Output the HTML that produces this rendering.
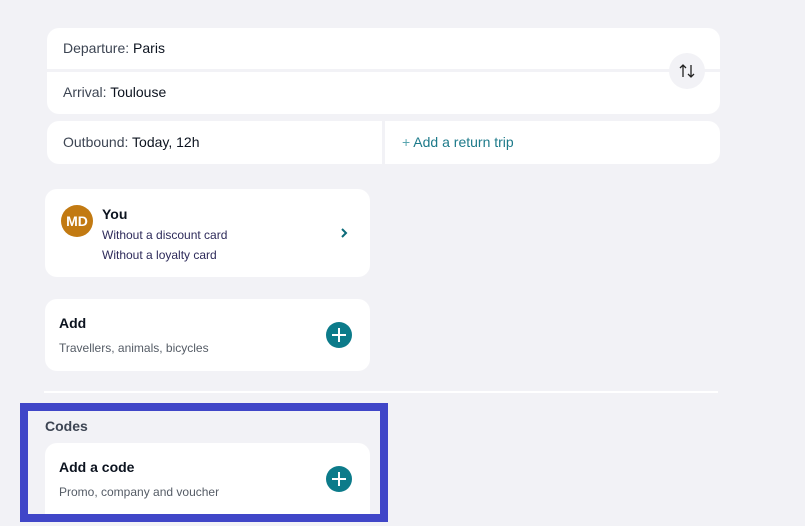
<!DOCTYPE html>
<html><head><meta charset="utf-8"><style>
*{box-sizing:border-box;margin:0;padding:0}
body{width:805px;height:526px;background:#f2f2f6;font-family:"Liberation Sans",sans-serif;position:relative;overflow:hidden;color:#0c131f}
.card{position:absolute;background:#fff;border-radius:12px}
.t{position:absolute;white-space:nowrap}
.plus{position:absolute;width:26px;height:26px;border-radius:50%;background:#0c7b8a}
.plus:before,.plus:after{content:"";position:absolute;background:#fff;left:50%;top:50%;transform:translate(-50%,-50%)}
.plus:before{width:14px;height:2px}.plus:after{width:2px;height:14px}
</style></head><body>
<div class="card" style="left:47px;top:28px;width:673px;height:86px"></div>
<div style="position:absolute;left:47px;top:69px;width:673px;height:3px;background:#f2f2f6"></div>
<div class="t" style="left:63px;top:40px;font-size:14px;color:#3d4553">Departure: <span style="color:#0c131f">Paris</span></div>
<div class="t" style="left:63px;top:84px;font-size:14px;color:#3d4553">Arrival: <span style="color:#0c131f">Toulouse</span></div>
<div style="position:absolute;left:669px;top:53px;width:36px;height:36px;border-radius:50%;background:#f2f2f6"></div>
<svg style="position:absolute;left:678px;top:62px" width="18" height="18" viewBox="0 0 18 18" fill="none" stroke="#222" stroke-width="1.3"><path d="M5 15V3M2 6l3-3 3 3M13 3v12M10 12l3 3 3-3"/></svg>
<div class="card" style="left:47px;top:121px;width:673px;height:43px"></div>
<div style="position:absolute;left:382px;top:121px;width:3px;height:43px;background:#f2f2f6"></div>
<div class="t" style="left:63px;top:134px;font-size:14px;color:#3d4553">Outbound: <span style="color:#0c131f">Today, 12h</span></div>
<div class="t" style="left:402px;top:134px;font-size:14px;color:#1d7a8a"><span style="color:#5aa6b0">+</span> Add a return trip</div>

<div class="card" style="left:45px;top:189px;width:325px;height:88px"></div>
<div style="position:absolute;left:61px;top:205px;width:32px;height:32px;border-radius:50%;background:#c27a12;color:#fff;font-weight:bold;font-size:14px;text-align:center;line-height:32px">MD</div>
<div class="t" style="left:102px;top:206px;font-size:14px;font-weight:bold">You</div>
<div class="t" style="left:102px;top:228px;font-size:12px;color:#2d2a5a">Without a discount card</div>
<div class="t" style="left:102px;top:248px;font-size:12px;color:#2d2a5a">Without a loyalty card</div>
<svg style="position:absolute;left:339px;top:227px" width="10" height="12" viewBox="0 0 10 12" fill="none" stroke="#0c6b7a" stroke-width="2"><path d="M3 2l4 4-4 4"/></svg>

<div class="card" style="left:45px;top:299px;width:325px;height:72px"></div>
<div class="t" style="left:59px;top:315px;font-size:14px;font-weight:bold">Add</div>
<div class="t" style="left:59px;top:341px;font-size:12px;color:#555c66">Travellers, animals, bicycles</div>
<div class="plus" style="left:326px;top:322px"></div>

<div style="position:absolute;left:44px;top:391px;width:674px;height:2px;background:#fff"></div>

<div style="position:absolute;left:20px;top:403px;width:368px;height:119px;border:8px solid #4046c8"></div>
<div class="t" style="left:45px;top:418px;font-size:14px;color:#3d4553;font-weight:bold">Codes</div>
<div class="card" style="left:45px;top:443px;width:325px;height:71px;border-radius:12px 12px 0 0"></div>
<div class="t" style="left:59px;top:459px;font-size:14px;font-weight:bold">Add a code</div>
<div class="t" style="left:59px;top:485px;font-size:12px;color:#555c66">Promo, company and voucher</div>
<div class="plus" style="left:326px;top:466px"></div>
</body></html>
